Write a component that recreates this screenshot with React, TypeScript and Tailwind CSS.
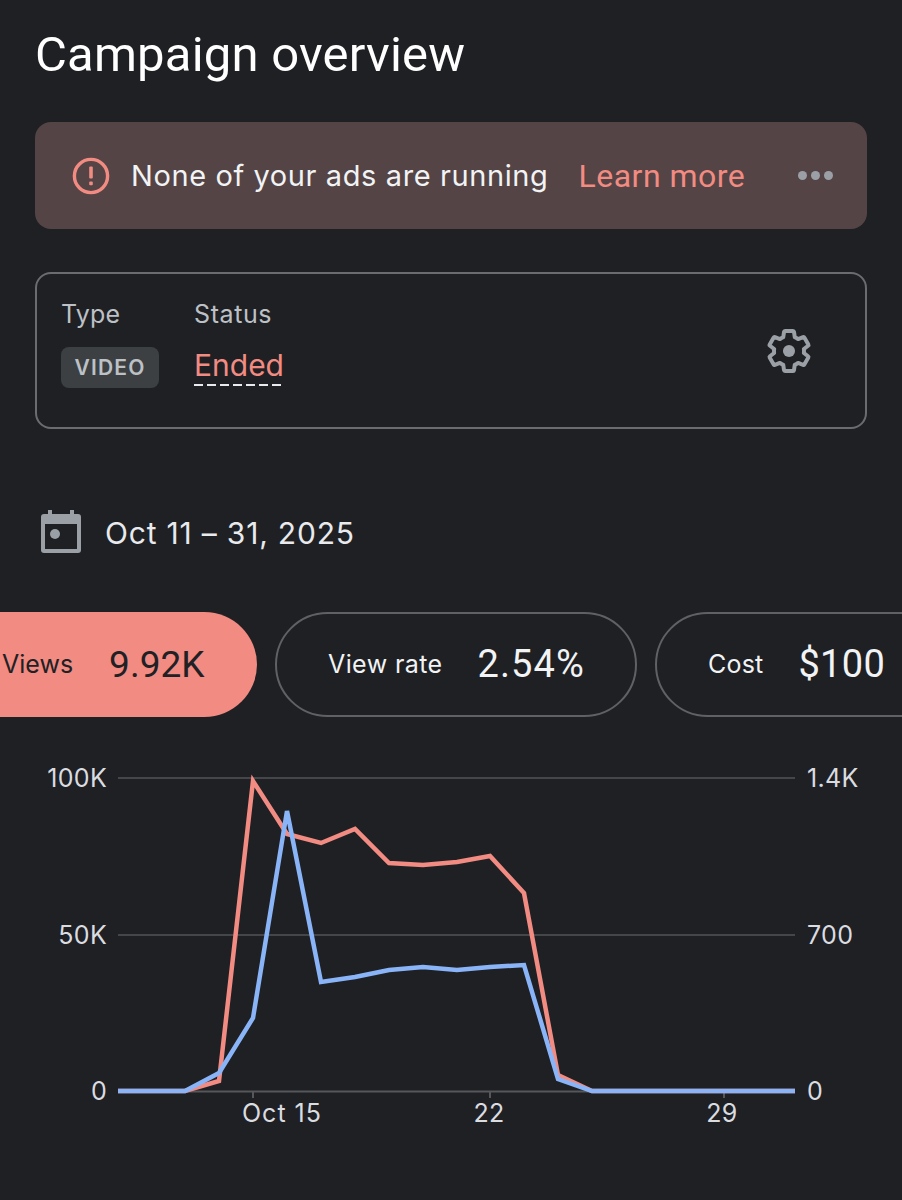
const red = "118,1091 185,1091 219,1081 253,781 287,834 321,843 355,829 389,863 423,865 457,862 490,856 524,893 558,1075 592,1091 795,1091";
const blue = "118,1091 185,1091 219,1073 253,1018 287,811 321,982 355,977 389,970 423,967 457,970 490,967 524,965 558,1079 592,1091 795,1091";

function AlertIcon() {
  return (
    <svg width="38" height="38" viewBox="0 0 38 38" aria-hidden className="shrink-0">
      <circle cx="19" cy="19" r="16.6" fill="none" stroke="#f28b82" strokeWidth="3.4" />
      <rect x="17.2" y="9.5" width="3.6" height="12" rx="1" fill="#f28b82" />
      <rect x="17.2" y="24.5" width="3.6" height="3.8" rx="1" fill="#f28b82" />
    </svg>
  );
}

function GearIcon() {
  return (
    <svg width="50" height="50" viewBox="0 0 24 24" aria-hidden>
      <path
        fill="none"
        stroke="#9aa0a6"
        strokeWidth="1.9"
        strokeLinejoin="round"
        d="M19.14 12.94c.04-.3.06-.61.06-.94 0-.32-.02-.64-.07-.94l2.03-1.58c.18-.14.23-.41.12-.61l-1.92-3.32c-.12-.22-.37-.29-.59-.22l-2.39.96c-.5-.38-1.03-.7-1.62-.94l-.36-2.54c-.04-.24-.24-.41-.48-.41h-3.84c-.24 0-.43.17-.47.41l-.36 2.54c-.59.24-1.13.57-1.62.94l-2.39-.96c-.22-.08-.47 0-.59.22L2.74 8.87c-.12.21-.08.47.12.61l2.03 1.58c-.05.3-.09.63-.09.94s.02.64.07.94l-2.03 1.58c-.18.14-.23.41-.12.61l1.92 3.32c.12.22.37.29.59.22l2.39-.96c.5.38 1.03.7 1.62.94l.36 2.54c.05.24.24.41.48.41h3.84c.24 0 .44-.17.47-.41l.36-2.54c.59-.24 1.13-.56 1.62-.94l2.39.96c.22.08.47 0 .59-.22l1.92-3.32c.12-.22.07-.47-.12-.61l-2.01-1.58z"
      />
      <circle cx="12" cy="12" r="2.9" fill="#9aa0a6" />
    </svg>
  );
}

function CalendarIcon() {
  return (
    <svg width="40" height="44" viewBox="0 0 40 44" aria-hidden className="shrink-0">
      <rect x="7" y="0" width="4" height="6" fill="#9aa0a6" />
      <rect x="29" y="0" width="4" height="6" fill="#9aa0a6" />
      <rect x="0" y="4" width="40" height="39" rx="3" fill="#9aa0a6" />
      <rect x="4" y="14" width="32" height="25" fill="#1f2024" />
      <circle cx="14" cy="24" r="5" fill="#9aa0a6" />
    </svg>
  );
}

function Chart() {
  const labelClass = "fill-[#dadce0] text-[25px] tracking-[0.3px] [font-family:Inter,sans-serif]";
  return (
    <svg width="902" height="400" viewBox="0 760 902 400" aria-hidden className="block">
      <line x1="118" x2="795" y1="778" y2="778" stroke="#44464a" strokeWidth="2" />
      <line x1="118" x2="795" y1="935" y2="935" stroke="#44464a" strokeWidth="2" />
      <line x1="118" x2="795" y1="1091.5" y2="1091.5" stroke="#55575b" strokeWidth="2" />
      <line x1="253" x2="253" y1="1091" y2="1098" stroke="#55575b" strokeWidth="2" />
      <line x1="490" x2="490" y1="1091" y2="1098" stroke="#55575b" strokeWidth="2" />
      <line x1="724" x2="724" y1="1091" y2="1098" stroke="#55575b" strokeWidth="2" />
      <polyline points={red} fill="none" stroke="#f28b82" strokeWidth="4.5" strokeLinejoin="miter" />
      <polyline points={blue} fill="none" stroke="#8ab4f8" strokeWidth="4.5" strokeLinejoin="miter" />
      <text x="107" y="787" textAnchor="end" className={labelClass}>100K</text>
      <text x="107" y="944" textAnchor="end" className={labelClass}>50K</text>
      <text x="107" y="1100" textAnchor="end" className={labelClass}>0</text>
      <text x="807" y="787" className={labelClass}>1.4K</text>
      <text x="807" y="944" className={labelClass}>700</text>
      <text x="807" y="1100" className={labelClass}>0</text>
      <text x="282" y="1122" textAnchor="middle" className="fill-[#dadce0] text-[25px] tracking-[1px] [font-family:Inter,sans-serif]">Oct 15</text>
      <text x="489" y="1122" textAnchor="middle" className={labelClass}>22</text>
      <text x="722" y="1122" textAnchor="middle" className={labelClass}>29</text>
    </svg>
  );
}

export default function App() {
  return (
    <div className="h-[1200px] w-[902px] overflow-hidden bg-[#1f2024] [font-family:Inter,sans-serif]">
      <div className="px-[35px] pt-[24px]">
        <h1 className="text-[49px] leading-[62px] font-normal tracking-[0.2px] text-white [font-family:Roboto,sans-serif]">Campaign overview</h1>

        <div className="mt-[36px] flex h-[107px] items-center rounded-[16px] bg-[#544445] pr-[34px] pl-[37px]">
          <AlertIcon />
          <span className="ml-[21px] text-[29px] tracking-[0.6px] text-[#f1f3f4]">None of your ads are running</span>
          <span className="ml-[30px] text-[32px] tracking-[0.5px] text-[#f28b82] [font-family:Roboto,sans-serif]">Learn more</span>
          <span className="ml-auto flex gap-[4px]">
            <span className="size-[9px] rounded-full bg-[#9aa0a6]" />
            <span className="size-[9px] rounded-full bg-[#9aa0a6]" />
            <span className="size-[9px] rounded-full bg-[#9aa0a6]" />
          </span>
        </div>

        <div className="mt-[43px] flex h-[157px] items-center justify-between rounded-[16px] border-2 border-[#6a6c70] pr-[51px] pl-[24px]">
          <div className="-mt-[16px] flex gap-[35px]">
            <div>
              <div className="text-[25px] leading-[34px] tracking-[0.2px] text-[#bdc1c6]">Type</div>
              <div className="mt-[16px] flex h-[41px] w-[98px] items-center justify-center rounded-[8px] bg-[#3c4043] text-[21px] font-semibold tracking-[1.2px] text-[#bdc1c6]">VIDEO</div>
            </div>
            <div>
              <div className="text-[25px] leading-[34px] tracking-[0.6px] text-[#bdc1c6]">Status</div>
              <div className="mt-[15px] text-[30px] leading-[38px] text-[#f28b82]">Ended</div>
              <div className="h-[2px] w-[88px] bg-[repeating-linear-gradient(90deg,#e8eaed_0,#e8eaed_9px,transparent_9px,transparent_13px)]" />
            </div>
          </div>
          <GearIcon />
        </div>

        <div className="mt-[81px] ml-[6px] flex items-start gap-[24px]">
          <CalendarIcon />
          <span className="text-[30px] leading-[46px] tracking-[0.8px] text-[#e8eaed]">Oct 11 – 31, 2025</span>
        </div>
      </div>

      <div className="mt-[56px] flex gap-[18px]">
        <div className="-ml-[60px] flex h-[105px] w-[317px] shrink-0 items-center rounded-full bg-[#f28b82] pl-[62px] text-[#202124]">
          <span className="text-[25px]">Views</span>
          <span className="ml-[36px] text-[37px] [font-family:Roboto,sans-serif]">9.92K</span>
        </div>
        <div className="flex h-[105px] w-[362px] shrink-0 items-center rounded-full border-2 border-[#5f6165] pl-[51px] text-[#f1f3f4]">
          <span className="text-[25px] tracking-[0.4px]">View rate</span>
          <span className="ml-[35px] text-[38px] tracking-[1.1px] [font-family:Roboto,sans-serif]">2.54%</span>
        </div>
        <div className="flex h-[105px] w-[330px] shrink-0 items-center rounded-full border-2 border-[#5f6165] pl-[51px] text-[#f1f3f4]">
          <span className="text-[25px] tracking-[0.2px]">Cost</span>
          <span className="ml-[35px] text-[38px] tracking-[0.3px] [font-family:Roboto,sans-serif]">$100</span>
        </div>
      </div>

      <div className="mt-[43px]">
        <Chart />
      </div>
    </div>
  );
}
